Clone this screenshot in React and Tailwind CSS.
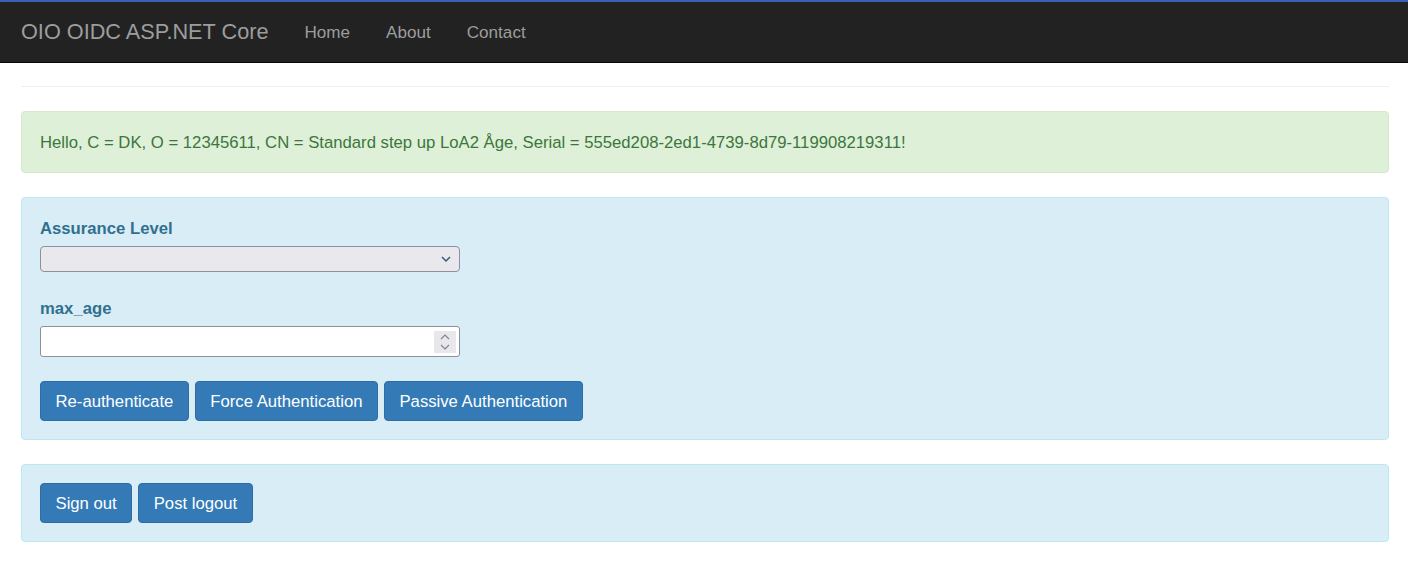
import React from 'react';

function Btn({ children }) {
  return (
    <button className="h-[40px] rounded-[4px] border border-[#2e6da4] bg-[#337ab7] px-[14.5px] pt-[2px] text-[16.7px] leading-none text-white">
      {children}
    </button>
  );
}

export default function App() {
  return (
    <div className="min-h-[565px] bg-white font-['Liberation_Sans',Arial,sans-serif] text-[16.7px] text-[#333]">
      {/* navbar */}
      <nav className="flex h-[63px] items-center border-t-2 border-b border-t-[#3b62b6] border-b-[#080808] bg-[#222] pt-[1px]">
        <span className="pl-[21px] pr-[18px] text-[21.7px] text-[#9d9d9d]">OIO OIDC ASP.NET Core</span>
        <div className="flex text-[17.1px] text-[#9d9d9d]">
          <a className="px-[18px]">Home</a>
          <a className="px-[18px]">About</a>
          <a className="px-[18px]">Contact</a>
        </div>
      </nav>

      <div className="pl-[21px] pr-[19px]">
        <hr className="mt-[23px] border-t border-[#eee]" />

        <div className="mt-[24px] rounded-[4px] border border-[#d6e9c6] bg-[#dff0d8] px-[18px] pt-[19px] pb-[17px] leading-[24px] text-[#3c763d]">
          Hello, C = DK, O = 12345611, CN = Standard step up LoA2 Åge, Serial = 555ed208-2ed1-4739-8d79-119908219311!
        </div>

        <div className="mt-[24px] rounded-[4px] border border-[#bce8f1] bg-[#d9edf7] px-[18px] pt-[19px] pb-[18px]">
          <label className="block font-bold leading-[23px] text-[#31708f]">Assurance Level</label>
          <div className="relative mt-[6px] h-[26px] w-[420px] rounded-[4px] border border-[#8f8f9d] bg-[#e9e8ed]">
            <svg className="absolute right-[8px] top-[8px]" width="10" height="8" viewBox="0 0 10 8" fill="none">
              <path d="M1 2l4 4 4-4" stroke="#2f5d80" strokeWidth="1.5" />
            </svg>
          </div>

          <label className="mt-[25px] block font-bold leading-[23px] text-[#31708f]">max_age</label>
          <div className="relative mt-[6px] h-[31px] w-[420px] rounded-[3px] border border-[#8f8f9d] bg-white">
            <div className="absolute right-[3px] top-[4px] flex h-[22px] w-[22px] flex-col items-center justify-center gap-[4px] bg-[#e8e8ec]">
              <svg width="10" height="6" viewBox="0 0 10 6" fill="none">
                <path d="M1 5l4-4 4 4" stroke="#84848f" strokeWidth="1.2" />
              </svg>
              <svg width="10" height="6" viewBox="0 0 10 6" fill="none">
                <path d="M1 1l4 4 4-4" stroke="#84848f" strokeWidth="1.2" />
              </svg>
            </div>
          </div>

          <div className="mt-[24px] flex gap-[6px]">
            <Btn>Re-authenticate</Btn>
            <Btn>Force Authentication</Btn>
            <Btn>Passive Authentication</Btn>
          </div>
        </div>

        <div className="mt-[24px] flex gap-[6px] rounded-[4px] border border-[#bce8f1] bg-[#d9edf7] px-[18px] pt-[18px] pb-[18px]">
          <Btn>Sign out</Btn>
          <Btn>Post logout</Btn>
        </div>
      </div>
    </div>
  );
}
